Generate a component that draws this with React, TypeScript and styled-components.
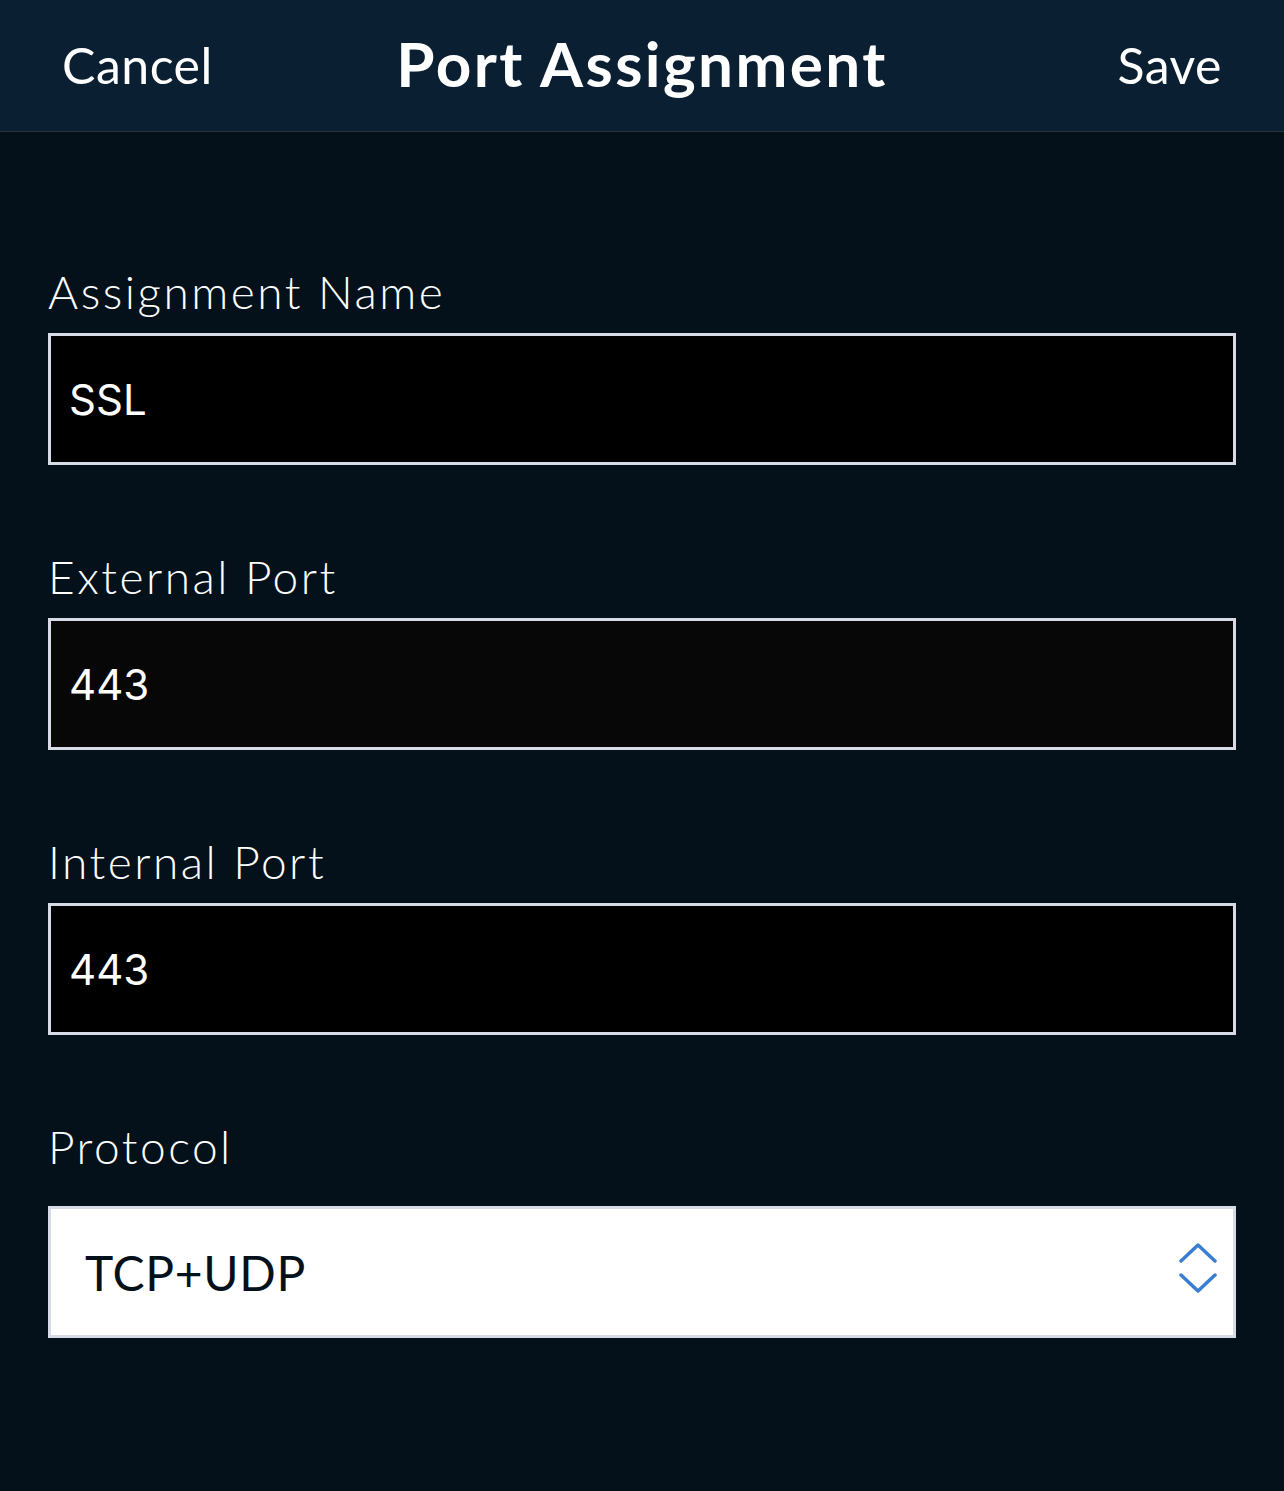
import React from 'react';
import styled, { createGlobalStyle } from 'styled-components';

const GlobalStyle = createGlobalStyle`
  html, body {
    margin: 0;
    padding: 0;
    background: #04111b;
  }
  body {
    font-family: 'Lato', 'Noto Sans', sans-serif;
    -webkit-font-smoothing: antialiased;
  }
`;

const Page = styled.div`
  width: 1284px;
  min-height: 1491px;
  background: #04111b;
`;

const Header = styled.header`
  display: grid;
  grid-template-columns: 1fr auto 1fr;
  align-items: center;
  height: 131px;
  padding: 0 62px 0 62px;
  background: #0a1f31;
  border-bottom: 1px solid #26333d;
`;

const HeaderButton = styled.button<{ align?: 'left' | 'right' }>`
  justify-self: ${({ align }) => (align === 'right' ? 'end' : 'start')};
  margin-bottom: 2px;
  padding: 0;
  border: 0;
  background: none;
  color: #ffffff;
  font-family: 'Lato', sans-serif;
  font-size: 50px;
  font-weight: 400;
  letter-spacing: 0.5px;
  cursor: pointer;
`;

const Title = styled.h1`
  margin: 0 0 6px;
  color: #ffffff;
  font-family: 'Lato', sans-serif;
  font-size: 62px;
  font-weight: 700;
  letter-spacing: 2.4px;
`;

const Form = styled.form`
  display: flex;
  flex-direction: column;
  padding: 137px 48px 0;
`;

const Field = styled.div<{ gap?: number }>`
  display: flex;
  flex-direction: column;
  gap: ${({ gap }) => gap ?? 18}px;
  & + & {
    margin-top: 89px;
  }
`;

const Label = styled.label`
  color: #ffffff;
  font-family: 'Lato', sans-serif;
  font-size: 46px;
  font-weight: 300;
  line-height: 46px;
  letter-spacing: 2.5px;
`;

const Input = styled.input<{ shade?: string }>`
  box-sizing: border-box;
  width: 100%;
  height: 132px;
  padding: 0 18px;
  border: 3px solid #d6dbe6;
  border-radius: 0;
  outline: none;
  background: ${({ shade }) => shade ?? '#000000'};
  color: #ffffff;
  font-family: 'Inter', 'Liberation Sans', sans-serif;
  font-size: 42px;
  font-weight: 400;
`;

const Select = styled.div`
  box-sizing: border-box;
  display: flex;
  align-items: center;
  justify-content: space-between;
  height: 132px;
  padding: 0 15px 0 34px;
  border: 3px solid #d6dbe6;
  background: #ffffff;
  color: #04111b;
  font-family: 'Lato', sans-serif;
  font-size: 48px;
  font-weight: 400;
  letter-spacing: 0.7px;
`;

const Chevrons = () => (
  <svg width="40" height="60" viewBox="0 0 40 60" fill="none">
    <path
      d="M3 19 L20 3 L37 19 M3 33 L20 49 L37 33"
      stroke="#3a7ed1"
      strokeWidth="3.5"
      strokeLinecap="round"
      strokeLinejoin="round"
    />
  </svg>
);

export default function App() {
  return (
    <Page>
      <GlobalStyle />
      <Header>
        <HeaderButton type="button">Cancel</HeaderButton>
        <Title>Port Assignment</Title>
        <HeaderButton type="button" align="right">
          Save
        </HeaderButton>
      </Header>
      <Form onSubmit={(e) => e.preventDefault()}>
        <Field>
          <Label>Assignment Name</Label>
          <Input defaultValue="SSL" />
        </Field>
        <Field>
          <Label>External Port</Label>
          <Input defaultValue="443" shade="#070707" />
        </Field>
        <Field>
          <Label>Internal Port</Label>
          <Input defaultValue="443" />
        </Field>
        <Field gap={36}>
          <Label>Protocol</Label>
          <Select>
            <span>TCP+UDP</span>
            <Chevrons />
          </Select>
        </Field>
      </Form>
    </Page>
  );
}
